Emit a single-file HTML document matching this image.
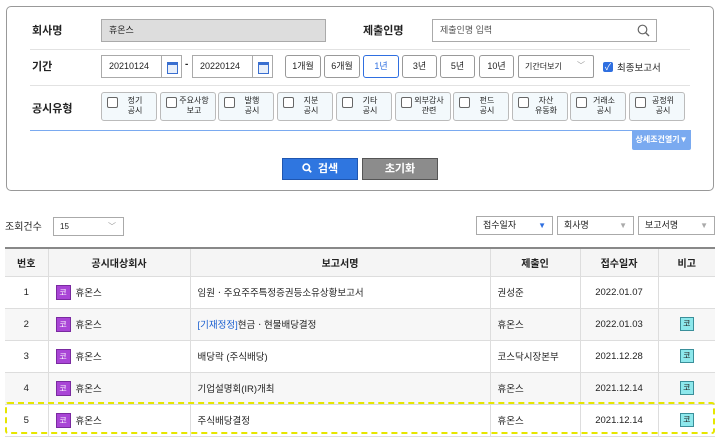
<!DOCTYPE html>
<html><head><meta charset="utf-8"><style>
*{box-sizing:border-box;margin:0;padding:0}
body{width:720px;height:440px;background:#fff;font-family:"Liberation Sans","Noto Sans CJK KR",sans-serif;font-size:10px;color:#222;position:relative;overflow:hidden}
.a{position:absolute}
.panel{left:6px;top:6px;width:708px;height:185px;border:1px solid #999;border-radius:5px}
.lbl{font-weight:bold;font-size:11px}
.inp{border:1px solid #aaa;background:#fff;height:23px;font-size:9px;line-height:21px;padding-left:7px}
.sep{height:1px;background:#e2e2e2}
.btn{border:1px solid #999;border-radius:3px;height:23px;text-align:center;line-height:21px;font-size:9px;background:#fff}
.cb{border:1px solid #bbb;border-radius:3px;background:#f3f9fc;height:29px;width:56px;font-size:8px;line-height:10px;text-align:center;padding-top:3px;padding-left:12px}
.cb:before{content:"";position:absolute;left:5px;top:4px;width:9px;height:9px;border:1px solid #666;border-radius:2px;background:#fff}
.cal{position:absolute;right:0;top:0;width:20px;height:21px;border-left:1px solid #aaa}
.cal:after{content:"";position:absolute;left:5px;top:6px;width:9px;height:8px;border:1px solid #3a6fd0;border-top-width:3px;background:#e8effa}
.sel{border:1px solid #aaa;height:19px;font-size:9px;line-height:17px;padding-left:6px;background:#fff}
table{position:absolute;left:5px;top:247px;width:710px;border-collapse:collapse;font-size:9.5px}
td,th{height:32px;border-left:1px solid #ddd;border-bottom:1px solid #ddd}
th{height:28px;background:#f5f5f5;font-weight:bold;font-size:10px}
tr td:first-child,tr th:first-child{border-left:none}
thead tr{border-top:2px solid #888}
tbody tr:nth-child(even){background:#f7f7f7}
.co{display:flex;align-items:center}
.k{display:inline-block;width:15px;height:15px;background:#a945d6;border:1px solid #7a2aa0;color:#fff;font-size:8px;line-height:13px;text-align:center;margin-right:5px}
.kc{display:inline-block;width:14px;height:14px;background:#8de8ec;border:1px solid #3a8f9a;font-size:8px;line-height:12px;text-align:center;vertical-align:middle}
.c{text-align:center}.l{padding-left:7px}
</style></head><body>
<div class="a panel"></div>
<div class="a lbl" style="left:32px;top:22px">회사명</div>
<div class="a inp" style="left:101px;top:19px;width:225px;background:#ddd">휴온스</div>
<div class="a lbl" style="left:363px;top:22px">제출인명</div>
<div class="a inp" style="left:432px;top:19px;width:225px;color:#555">제출인명 입력
<svg class="a" style="right:6px;top:4px" width="13" height="13" viewBox="0 0 13 13"><circle cx="5.5" cy="5.5" r="4.3" fill="none" stroke="#666" stroke-width="1.2"/><path d="M8.7 8.7L12 12" stroke="#666" stroke-width="1.4"/></svg></div>
<div class="a sep" style="left:30px;top:49px;width:660px"></div>
<div class="a lbl" style="left:32px;top:58px">기간</div>
<div class="a inp" style="left:101px;top:55px;width:81px">20210124<span class="cal"></span></div>
<div class="a" style="left:185px;top:59px;font-weight:bold">-</div>
<div class="a inp" style="left:192px;top:55px;width:81px">20220124<span class="cal"></span></div>
<div class="a btn" style="left:285px;top:55px;width:36px">1개월</div>
<div class="a btn" style="left:324px;top:55px;width:36px">6개월</div>
<div class="a btn" style="left:363px;top:55px;width:36px;border-color:#2f6fe0;color:#2f6fe0">1년</div>
<div class="a btn" style="left:402px;top:55px;width:35px">3년</div>
<div class="a btn" style="left:440px;top:55px;width:35px">5년</div>
<div class="a btn" style="left:479px;top:55px;width:35px">10년</div>
<div class="a btn" style="left:518px;top:55px;width:76px;text-align:left;padding-left:6px;font-size:8px;border-radius:2px">기간더보기<span class="a" style="right:8px;top:-1px;color:#999">﹀</span></div>
<div class="a" style="left:603px;top:62px;width:10px;height:10px;background:#2f6fe0;border-radius:2px;color:#fff;font-size:9px;line-height:10px;text-align:center">✓</div>
<div class="a" style="left:617px;top:60px;font-size:9.5px">최종보고서</div>
<div class="a sep" style="left:30px;top:85px;width:660px"></div>
<div class="a lbl" style="left:32px;top:100px">공시유형</div>
<div class="a cb" style="left:101px;top:92px">정기<br>공시</div>
<div class="a cb" style="left:160px;top:92px">주요사항<br>보고</div>
<div class="a cb" style="left:218px;top:92px">발행<br>공시</div>
<div class="a cb" style="left:277px;top:92px">지분<br>공시</div>
<div class="a cb" style="left:336px;top:92px">기타<br>공시</div>
<div class="a cb" style="left:395px;top:92px">외부감사<br>관련</div>
<div class="a cb" style="left:453px;top:92px">펀드<br>공시</div>
<div class="a cb" style="left:512px;top:92px">자산<br>유동화</div>
<div class="a cb" style="left:570px;top:92px">거래소<br>공시</div>
<div class="a cb" style="left:629px;top:92px">공정위<br>공시</div>
<div class="a" style="left:30px;top:130px;width:661px;height:1px;background:#7aaaf0"></div>
<div class="a" style="left:632px;top:130px;width:59px;height:20px;background:#7aaaf0;color:#fff;font-size:8px;font-weight:bold;line-height:20px;text-align:center;border-radius:0 0 2px 2px">상세조건열기▼</div>
<div class="a" style="left:282px;top:158px;width:76px;height:22px;background:#2f76e0;border:1px solid #1f56b0;color:#fff;font-weight:bold;font-size:11px;line-height:20px;text-align:center"><svg width="10" height="10" viewBox="0 0 10 10" style="vertical-align:-1px;margin-right:6px"><circle cx="4.3" cy="4.3" r="3.2" fill="none" stroke="#fff" stroke-width="1.6"/><path d="M6.6 6.6L9.2 9.2" stroke="#fff" stroke-width="1.8"/></svg>검색</div>
<div class="a" style="left:362px;top:158px;width:76px;height:22px;background:#8c8c8c;border:1px solid #555;color:#fff;font-weight:bold;font-size:11px;line-height:20px;text-align:center">초기화</div>

<div class="a" style="left:5px;top:218px;font-size:10px">조회건수</div>
<div class="a sel" style="left:53px;top:217px;width:71px;font-size:8px">15<span class="a" style="right:7px;top:0;color:#999">﹀</span></div>
<div class="a sel" style="left:476px;top:216px;width:77px">접수일자<span class="a" style="right:6px;top:0;color:#2f6fe0;font-size:8px">▼</span></div>
<div class="a sel" style="left:557px;top:216px;width:77px">회사명<span class="a" style="right:6px;top:0;color:#aaa;font-size:8px">▼</span></div>
<div class="a sel" style="left:638px;top:216px;width:77px">보고서명<span class="a" style="right:6px;top:0;color:#aaa;font-size:8px">▼</span></div>

<table>
<colgroup><col style="width:43px"><col style="width:142px"><col style="width:300px"><col style="width:90px"><col style="width:78px"><col></colgroup>
<thead><tr><th>번호</th><th>공시대상회사</th><th>보고서명</th><th>제출인</th><th>접수일자</th><th>비고</th></tr></thead>
<tbody>
<tr><td class="c">1</td><td class="l"><div class="co"><span class="k">코</span>휴온스</div></td><td class="l">임원ㆍ주요주주특정증권등소유상황보고서</td><td class="l">권성준</td><td class="c">2022.01.07</td><td></td></tr>
<tr><td class="c">2</td><td class="l"><div class="co"><span class="k">코</span>휴온스</div></td><td class="l"><span style="color:#1a5fd0">[기재정정]</span>현금ㆍ현물배당결정</td><td class="l">휴온스</td><td class="c">2022.01.03</td><td class="c"><span class="kc">코</span></td></tr>
<tr><td class="c">3</td><td class="l"><div class="co"><span class="k">코</span>휴온스</div></td><td class="l">배당락 (주식배당)</td><td class="l">코스닥시장본부</td><td class="c">2021.12.28</td><td class="c"><span class="kc">코</span></td></tr>
<tr><td class="c">4</td><td class="l"><div class="co"><span class="k">코</span>휴온스</div></td><td class="l">기업설명회(IR)개최</td><td class="l">휴온스</td><td class="c">2021.12.14</td><td class="c"><span class="kc">코</span></td></tr>
<tr style="background:#fff"><td class="c">5</td><td class="l"><div class="co"><span class="k">코</span>휴온스</div></td><td class="l">주식배당결정</td><td class="l">휴온스</td><td class="c">2021.12.14</td><td class="c"><span class="kc">코</span></td></tr>
</tbody></table>
<div class="a" style="left:5px;top:402px;width:710px;height:32px;border:2px dashed #e6e600;border-radius:3px"></div>
</body></html>
